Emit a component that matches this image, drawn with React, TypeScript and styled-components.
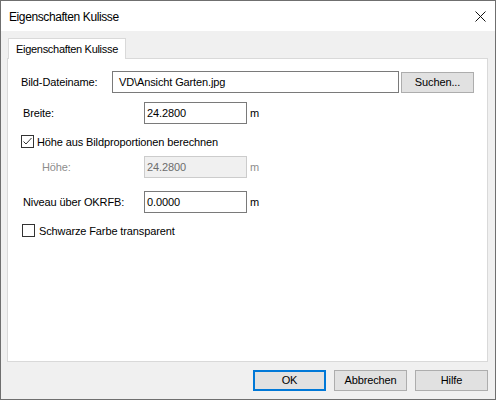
import React from "react";
import styled, { createGlobalStyle } from "styled-components";

const Global = createGlobalStyle`
  html, body { margin: 0; padding: 0; background: #ffffff; }
  * { box-sizing: border-box; }
`;

const FONT = `"Liberation Sans", Arial, sans-serif`;

const Window = styled.div`
  width: 496px;
  height: 400px;
  border: 1px solid #6f6f6f;
  display: flex;
  flex-direction: column;
  font-family: ${FONT};
  font-size: 11px;
  letter-spacing: -0.12px;
  color: #000;
  overflow: hidden;
`;

const TitleBar = styled.div`
  height: 30px;
  flex: none;
  background: #ffffff;
  display: flex;
  align-items: center;
  justify-content: space-between;
  padding: 0 9px 0 8px;
`;

const TitleText = styled.span`
  font-size: 12px;
  letter-spacing: -0.4px;
  padding-top: 1px;
`;

const CloseBtn = styled.div`
  width: 12px;
  height: 12px;
  display: flex;
  align-items: center;
  justify-content: center;
`;

const Body = styled.div`
  flex: 1;
  background: #f0f0f0;
  display: flex;
  flex-direction: column;
  padding: 7px 7px 8px 6px;
`;

const TabStrip = styled.div`
  display: flex;
  height: 20px;
  flex: none;
  position: relative;
  z-index: 1;
`;

const Tab = styled.div`
  margin-left: 1px;
  width: 118px;
  height: 21px;
  background: #ffffff;
  border: 1px solid #d9d9d9;
  border-bottom: none;
  display: flex;
  align-items: center;
  justify-content: center;
  padding-bottom: 1px;
  letter-spacing: -0.3px;
`;

const Panel = styled.div`
  flex: 1;
  background: #ffffff;
  border: 1px solid #d9d9d9;
  display: flex;
  flex-direction: column;
  padding: 0 0 0 13px;
`;

const Row = styled.div<{ $top: number; $h?: number }>`
  display: flex;
  align-items: center;
  margin-top: ${(p) => p.$top}px;
  height: ${(p) => p.$h ?? 22}px;
`;

const Label = styled.span<{ $indent?: number; $w: number; $disabled?: boolean }>`
  margin-left: ${(p) => p.$indent ?? 0}px;
  width: ${(p) => p.$w}px;
  flex: none;
  color: ${(p) => (p.$disabled ? "#8d8d8d" : "#000")};
`;

const Input = styled.div<{ $w: number; $pad?: number; $disabled?: boolean }>`
  width: ${(p) => p.$w}px;
  height: 22px;
  border: 1px solid ${(p) => (p.$disabled ? "#cccccc" : "#7a7a7a")};
  background: ${(p) => (p.$disabled ? "#f0f0f0" : "#ffffff")};
  color: ${(p) => (p.$disabled ? "#6d6d6d" : "#000")};
  display: flex;
  align-items: center;
  padding-left: ${(p) => p.$pad ?? 2}px;
  padding-bottom: 1px;
  flex: none;
`;

const Unit = styled.span<{ $disabled?: boolean }>`
  margin-left: 3px;
  color: ${(p) => (p.$disabled ? "#8d8d8d" : "#000")};
`;

const Button = styled.div<{ $default?: boolean }>`
  width: 73px;
  height: 21px;
  flex: none;
  background: #e1e1e1;
  border: ${(p) => (p.$default ? "2px solid #0078d7" : "1px solid #adadad")};
  display: flex;
  align-items: center;
  justify-content: center;
  padding-bottom: 1px;
`;

const Check = styled.div<{ $indent?: number }>`
  width: 13px;
  height: 13px;
  flex: none;
  margin-left: ${(p) => p.$indent ?? 0}px;
  border: 1px solid #333333;
  background: #ffffff;
  display: flex;
  align-items: center;
  justify-content: center;
`;

const CheckText = styled.span<{ $gap: number }>`
  margin-left: ${(p) => p.$gap}px;
`;

const Footer = styled.div`
  flex: none;
  display: flex;
  justify-content: flex-end;
  gap: 8px;
  margin-top: 8px;
`;

export default function App() {
  return (
    <>
      <Global />
      <Window>
        <TitleBar>
          <TitleText>Eigenschaften Kulisse</TitleText>
          <CloseBtn>
            <svg width="11" height="11" viewBox="0 0 11 11">
              <path d="M0.5 0.5 L10.5 10.5 M10.5 0.5 L0.5 10.5" stroke="#111" strokeWidth="1" fill="none" />
            </svg>
          </CloseBtn>
        </TitleBar>
        <Body>
          <TabStrip>
            <Tab>Eigenschaften Kulisse</Tab>
          </TabStrip>
          <Panel>
            <Row $top={12}>
              <Label $w={91}>Bild-Dateiname:</Label>
              <Input $w={287} $pad={6}>VD\Ansicht Garten.jpg</Input>
              <Button style={{ marginLeft: 2 }}>Suchen...</Button>
            </Row>
            <Row $top={9}>
              <Label $indent={2} $w={121}>Breite:</Label>
              <Input $w={103}>24.2800</Input>
              <Unit>m</Unit>
            </Row>
            <Row $top={11} $h={13}>
              <Check>
                <svg width="11" height="11" viewBox="0 0 11 11">
                  <path d="M1.5 5.5 L4 8 L9.5 2" stroke="#333" strokeWidth="1" fill="none" />
                </svg>
              </Check>
              <CheckText $gap={3}>Höhe aus Bildproportionen berechnen</CheckText>
            </Row>
            <Row $top={8}>
              <Label $indent={21} $w={102} $disabled>Höhe:</Label>
              <Input $w={103} $disabled>24.2800</Input>
              <Unit $disabled>m</Unit>
            </Row>
            <Row $top={13}>
              <Label $indent={2} $w={121}>Niveau über OKRFB:</Label>
              <Input $w={103}>0.0000</Input>
              <Unit>m</Unit>
            </Row>
            <Row $top={11} $h={13}>
              <Check $indent={1} />
              <CheckText $gap={4}>Schwarze Farbe transparent</CheckText>
            </Row>
          </Panel>
          <Footer>
            <Button $default>OK</Button>
            <Button>Abbrechen</Button>
            <Button>Hilfe</Button>
          </Footer>
        </Body>
      </Window>
    </>
  );
}
